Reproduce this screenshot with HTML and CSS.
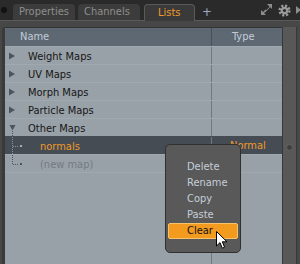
FILE: index.html
```html
<!DOCTYPE html>
<html lang="en">
<head>
<meta charset="UTF-8">
<title>Lists</title>
<link rel="stylesheet" href="styles.css">
</head>
<body>
    <div class="topbar">
        <span class="dot"></span>
        <div class="tab">Properties</div>
        <div class="tab">Channels</div>
        <div class="tab active">Lists</div>
        <span class="plus">+</span>
        <div class="tools">
            <svg width="12" height="12" viewBox="0 0 12 12">
                <polygon points="11,0 11,5 9.3,3.3 4,8.6 3.4,8 8.7,2.7 6,0" fill="#8d8d8d"/>
                <polygon points="0,11 0,6 2,8 4.5,5.5 5.5,6.5 3,9 5,11" fill="#8d8d8d"/>
            </svg>
            <svg width="13" height="13" viewBox="0 0 13 13">
                <circle cx="6.5" cy="6.5" r="4.6" fill="none" stroke="#9a9a9a" stroke-width="3" stroke-dasharray="2 1.6"/>
                <circle cx="6.5" cy="6.5" r="3.8" fill="#9a9a9a"/>
                <circle cx="6.5" cy="6.5" r="1.6" fill="#2a2a2a"/>
            </svg>
            <svg width="5" height="8" viewBox="0 0 5 8">
                <polygon points="0,0 5,4 0,8" fill="#8d8d8d"/>
            </svg>
        </div>
    </div>

    <div class="panel">
        <div class="list">
            <div class="head">
                <div class="c1">Name</div>
                <div class="c2">Type</div>
            </div>
            <div class="row">
                <div class="c1"><svg class="tw" width="18" height="18"><polygon points="0,5.5 6,9 0,12.5" fill="#4d545c"/></svg><span class="lbl">Weight Maps</span></div>
                <div class="c2"></div>
            </div>
            <div class="row">
                <div class="c1"><svg class="tw" width="18" height="18"><polygon points="0,5.5 6,9 0,12.5" fill="#4d545c"/></svg><span class="lbl">UV Maps</span></div>
                <div class="c2"></div>
            </div>
            <div class="row">
                <div class="c1"><svg class="tw" width="18" height="18"><polygon points="0,5.5 6,9 0,12.5" fill="#4d545c"/></svg><span class="lbl">Morph Maps</span></div>
                <div class="c2"></div>
            </div>
            <div class="row">
                <div class="c1"><svg class="tw" width="18" height="18"><polygon points="0,5.5 6,9 0,12.5" fill="#4d545c"/></svg><span class="lbl">Particle Maps</span></div>
                <div class="c2"></div>
            </div>
            <div class="row">
                <div class="c1"><svg class="tw" width="18" height="18"><polygon points="0.5,6 6.5,6 3.5,11.5" fill="#4d545c"/><line x1="3.5" y1="12" x2="3.5" y2="18" stroke="#4d545c" stroke-dasharray="1 1"/></svg><span class="lbl">Other Maps</span></div>
                <div class="c2"></div>
            </div>
            <div class="row sel">
                <div class="c1"><svg class="tw" width="18" height="18"><line x1="3.5" y1="0" x2="3.5" y2="18" stroke="#8a9098" stroke-dasharray="1 1"/><line x1="4" y1="9.5" x2="10" y2="9.5" stroke="#8a9098" stroke-dasharray="1 1"/><rect x="11" y="8" width="2" height="2" fill="#a8aeb5"/></svg><span class="lbl child">normals</span></div>
                <div class="c2">Normal</div>
            </div>
            <div class="row">
                <div class="c1"><svg class="tw" width="18" height="18"><line x1="3.5" y1="0" x2="3.5" y2="9" stroke="#4d545c" stroke-dasharray="1 1"/><line x1="4" y1="9.5" x2="10" y2="9.5" stroke="#4d545c" stroke-dasharray="1 1"/><rect x="11" y="8" width="2" height="2" fill="#4d545c"/></svg><span class="lbl child new">(new map)</span></div>
                <div class="c2"></div>
            </div>
            <div class="row fill">
                <div class="c1"></div>
                <div class="c2"></div>
            </div>
        </div>
        <div class="scroll"><span class="knob"></span></div>
    </div>

    <div class="menu">
        <div class="item">Delete</div>
        <div class="item">Rename</div>
        <div class="item">Copy</div>
        <div class="item">Paste</div>
        <div class="item on">Clear</div>
    </div>

    <svg class="cursor" width="12" height="19" viewBox="0 0 12 19">
        <polygon points="0.5,0.5 0.5,15 4,11.6 6.3,17.2 8.6,16.2 6.3,10.8 11,10.8" fill="#fff" stroke="#000" stroke-width="1"/>
    </svg>
</body>
</html>
```

FILE: styles.css
```css
html, body {
    margin: 0;
    height: 100%;
    overflow: hidden;
}

body {
    background: #2a2a2a;
    font-family: "DejaVu Sans Condensed", "DejaVu Sans", sans-serif;
    font-stretch: condensed;
    font-size: 11px;
    display: flex;
    flex-direction: column;
}

.topbar {
    height: 20px;
    display: flex;
    align-items: flex-end;
    background: #2a2a2a;
    flex-shrink: 0;
}

.dot {
    width: 6px;
    height: 6px;
    border-radius: 50%;
    background: #121212;
    margin: 0 6px 7px 1px;
    align-self: flex-end;
}

.tab {
    height: 16px;
    line-height: 16px;
    padding: 0 6px;
    margin-right: 3px;
    background: #3c3c3c;
    color: #8e8e8e;
    border-radius: 4px 4px 0 0;
    width: 50px;
}

.tab:nth-of-type(3) {
    width: 47px;
}

.tab.active {
    width: 22px;
    margin-left: 1px;
    padding: 0 14px 0 13px;
    background: #3a3a3a;
    color: #f09a2a;
    border: 1px solid #5a5a5a;
    border-bottom: none;
    height: 16px;
    position: relative;
    top: 1px;
}

.plus {
    color: #a2abc2;
    font-size: 13px;
    line-height: 16px;
    margin-left: 4px;
}

.tools {
    margin-left: auto;
    display: flex;
    align-items: center;
    gap: 5px;
    height: 20px;
    margin-right: -1px;
}

.panel {
    flex: 1;
    display: flex;
    background: #474747;
    border-top: 1px solid #5a5a5a;
    padding: 6px 3px 0 2px;
    min-height: 0;
}

.list {
    flex: 1;
    display: flex;
    flex-direction: column;
    background: #99a1a8;
    border-top: 1px solid #333;
    border-left: 3px solid #3a3a3a;
    border-top-left-radius: 4px;
    overflow: hidden;
}

.head, .row {
    display: grid;
    grid-template-columns: 206px 1fr;
    flex-shrink: 0;
}

.head {
    height: 18px;
    line-height: 17px;
    background: #5d6873;
    color: #c3ccd6;
}

.head .c1 {
    padding-left: 15px;
}

.head .c2 {
    padding-left: 20px;
    border-left: 1px solid #46515b;
}

.row {
    height: 18px;
    box-sizing: border-box;
    border-top: 1px solid #a1a9b0;
    color: #161616;
}

.row .c1 {
    display: flex;
    align-items: center;
    padding-left: 4px;
}

.row .c2 {
    border-left: 1px solid #6f777f;
    padding-left: 18px;
    line-height: 17px;
}

.tw {
    flex-shrink: 0;
}

.lbl {
    margin-left: 1px;
}

.lbl.child {
    margin-left: 13px;
}

.row.sel {
    background: #464c53;
    border-top-color: #464c53;
    color: #ee9a2a;
}

.lbl.new {
    color: #737b84;
}

.row.fill {
    flex: 1;
}

.scroll {
    width: 13px;
    background: #585858;
    border-left: 1px solid #383838;
    border-right: 1px solid #383838;
    display: flex;
    justify-content: center;
}

.knob {
    width: 5px;
    height: 5px;
    margin-top: 117px;
    border-radius: 50%;
    background: #3e3e3e;
    border: 1px solid #666;
}

.menu {
    position: absolute;
    left: 165px;
    top: 144px;
    width: 76px;
    height: 109px;
    padding: 14px 2px 0;
    box-sizing: border-box;
    background: #595959;
    border: 1px solid #303030;
    border-radius: 5px;
    color: #c6ced8;
}

.item {
    height: 16px;
    line-height: 16px;
    padding-left: 19px;
}

.item.on {
    background: #f29b1e;
    color: #111;
    border: 1px solid #f6c26c;
    border-radius: 2px;
    line-height: 14px;
    padding-left: 18px;
    box-sizing: border-box;
}

.cursor {
    position: absolute;
    left: 216px;
    top: 231px;
}
```
